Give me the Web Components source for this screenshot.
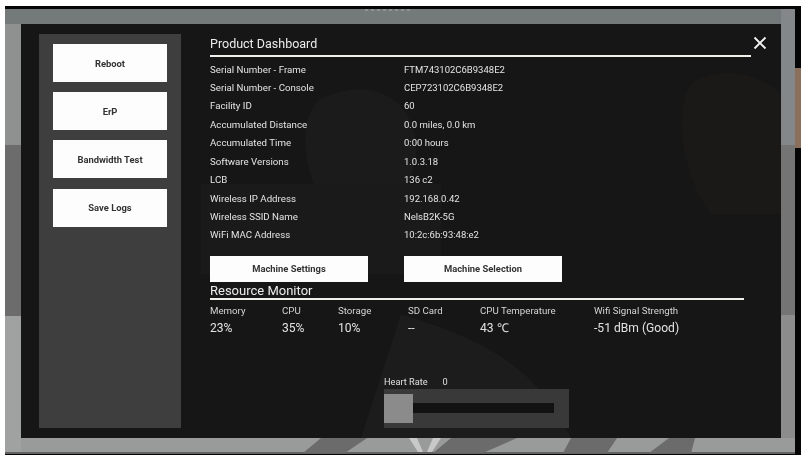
<!DOCTYPE html>
<html>
<head>
<meta charset="utf-8">
<title>Product Dashboard</title>
<style>
  html, body { margin: 0; background: #fff; }
  body { width: 808px; height: 462px; overflow: hidden; font-family: Roboto, "Liberation Sans", sans-serif; }
</style>
</head>
<body>
<x-screen>
  <x-modal>
    <x-sidebar>
      <x-button>Reboot</x-button>
      <x-button>ErP</x-button>
      <x-button>Bandwidth Test</x-button>
      <x-button>Save Logs</x-button>
    </x-sidebar>
    <x-main>
      <x-heading>Product Dashboard</x-heading>
      <x-info-list>
        <x-info-row label="Serial Number - Frame" value="FTM743102C6B9348E2"></x-info-row>
        <x-info-row label="Serial Number - Console" value="CEP723102C6B9348E2"></x-info-row>
        <x-info-row label="Facility ID" value="60"></x-info-row>
        <x-info-row label="Accumulated Distance" value="0.0 miles, 0.0 km"></x-info-row>
        <x-info-row label="Accumulated Time" value="0:00 hours"></x-info-row>
        <x-info-row label="Software Versions" value="1.0.3.18"></x-info-row>
        <x-info-row label="LCB" value="136 c2"></x-info-row>
        <x-info-row label="Wireless IP Address" value="192.168.0.42"></x-info-row>
        <x-info-row label="Wireless SSID Name" value="NelsB2K-5G"></x-info-row>
        <x-info-row label="WiFi MAC Address" value="10:2c:6b:93:48:e2"></x-info-row>
      </x-info-list>
      <x-actions>
        <x-button kind="wide">Machine Settings</x-button>
        <x-button kind="wide">Machine Selection</x-button>
      </x-actions>
      <x-heading kind="sub">Resource Monitor</x-heading>
      <x-stats>
        <x-stat label="Memory" value="23%" style="width:72px"></x-stat>
        <x-stat label="CPU" value="35%" style="width:56px"></x-stat>
        <x-stat label="Storage" value="10%" style="width:70px"></x-stat>
        <x-stat label="SD Card" value="--" style="width:72px"></x-stat>
        <x-stat label="CPU Temperature" value="43 ℃" style="width:114px"></x-stat>
        <x-stat label="Wifi Signal Strength" value="-51 dBm (Good)"></x-stat>
      </x-stats>
      <x-heart-rate value="0"></x-heart-rate>
    </x-main>
  </x-modal>
</x-screen>

<script>
  // small helper so each class just hands over its markup
  function shadow(el, html) {
    el.attachShadow({ mode: 'open' }).innerHTML = html;
  }

  class XScreen extends HTMLElement {
    constructor() {
      super();
      shadow(this, `
        <style>
          :host { display: block; width: 796px; height: 449px; margin: 6px 0 0 5px; background: #060606; position: relative; overflow: hidden; filter: blur(.5px); }
          .frame {
            box-sizing: border-box; width: 790px; height: 444px; margin-top: 3px; padding: 15px 14px 15px 16px;
            background:
              linear-gradient(#737a79 0 15px, transparent 15px),
              linear-gradient(#8f9190 0 136px, #6c6c6c 136px 307px, #a0a1a1 307px);
          }
          .photo { position: absolute; left: 0; top: 0; width: 796px; height: 449px; }
          .inner { position: relative; }
        </style>
        <div class="frame">
          <svg class="photo" viewBox="0 0 796 449">
            <rect x="776" y="3" width="14" height="136" fill="#83878a"/>
            <rect x="776" y="139" width="14" height="170" fill="#747474"/>
            <rect x="776" y="309" width="14" height="138" fill="#8c8c8c"/>
            <rect x="16" y="432" width="774" height="14" fill="#999a9a"/>
            <rect x="0" y="446" width="790" height="2" fill="#626262"/>
            <path d="M316 432h46l-22 15h-42zM446 432h66l-34 15h-50zM566 432h46l-10 15h-44zM664 432h26l-4 15h-42z" fill="#6b6b6b"/>
            <path d="M404 432l9 14h5l-6-14zM428 432l-6 14h5l9-14z" fill="#c8c8c8"/>
            <path d="M360 4h45" stroke="#8f9594" stroke-width="2" stroke-dasharray="3 3"/>
            <path d="M790 62h6v80h-6z" fill="#8a6f5c"/>
          </svg>
          <div class="inner"><slot></slot></div>
        </div>
      `);
    }
  }

  class XModal extends HTMLElement {
    constructor() {
      super();
      shadow(this, `
        <style>
          :host { display: flex; box-sizing: border-box; width: 760px; height: 414px; padding: 10px 30px 10px 18px; gap: 29px; background: #161616; position: relative; }
          .back { position: absolute; left: 0; top: 0; width: 100%; height: 100%; }
          .close { position: absolute; left: 732px; top: 12px; width: 14px; height: 14px; }
          ::slotted(*) { position: relative; }
        </style>
        <svg class="back" viewBox="0 0 760 414">
          <path d="M300 75c40-20 90-10 95 45 3 40-25 75-70 70-40-6-55-95-25-115z" fill="#1b1b1b"/>
          <path d="M180 160h240v90H180z" fill="#1a1a1a"/>
          <path d="M380 290c60 20 130 40 170 124H340z" fill="#1c1c1c"/>
          <path d="M670 60c30-20 70-10 90 10v120h-70c-25-30-40-100-20-130z" fill="#1b1918"/>
        </svg>
        <svg class="close" viewBox="0 0 14 14"><path d="M1.5 1.5l11 11M12.5 1.5l-11 11" stroke="#f4f4f4" stroke-width="1.8" fill="none"/></svg>
        <slot></slot>
      `);
    }
  }

  class XSidebar extends HTMLElement {
    constructor() {
      super();
      shadow(this, `
        <style>
          :host { display: flex; flex-direction: column; box-sizing: border-box; flex: none; width: 142px; height: 394px; padding: 10px 14px; gap: 10.2px; background: #3e3e3e; }
        </style>
        <slot></slot>
      `);
    }
  }

  class XButton extends HTMLElement {
    constructor() {
      super();
      shadow(this, `
        <style>
          :host { display: flex; align-items: center; justify-content: center; box-sizing: border-box; height: 38px; background: #fdfdfd; color: #333; font-size: 9.4px; font-weight: 700; }
          :host([kind="wide"]) { width: 158px; height: 26px; }
        </style>
        <slot></slot>
      `);
    }
  }

  class XMain extends HTMLElement {
    constructor() {
      super();
      shadow(this, `
        <style>
          :host { display: flex; flex-direction: column; flex: 1; min-width: 0; color: #e6e6e6; }
        </style>
        <slot></slot>
      `);
    }
  }

  class XHeading extends HTMLElement {
    constructor() {
      super();
      shadow(this, `
        <style>
          :host { display: block; box-sizing: border-box; height: 23px; padding-top: 1px; border-bottom: 2px solid #f0f0ea; color: #ececec; font-size: 12.5px; line-height: 18px; }
          :host([kind="sub"]) { width: 534px; height: 17px; padding-top: 0; line-height: 15px; font-size: 13px; }
        </style>
        <slot></slot>
      `);
    }
  }

  class XInfoList extends HTMLElement {
    constructor() {
      super();
      shadow(this, `
        <style>
          :host { display: block; margin-top: 3.5px; }
        </style>
        <slot></slot>
      `);
    }
  }

  class XInfoRow extends HTMLElement {
    constructor() {
      super();
      shadow(this, `
        <style>
          :host { display: grid; grid-template-columns: 194px 1fr; height: 18.45px; line-height: 18.45px; font-size: 9.7px; color: #e4e4e4; }
          span + span { font-size: 9.5px; }
        </style>
        <span>${this.getAttribute('label')}</span>
        <span>${this.getAttribute('value')}</span>
      `);
    }
  }

  class XActions extends HTMLElement {
    constructor() {
      super();
      shadow(this, `
        <style>
          :host { display: flex; gap: 36px; margin-top: 11px; margin-bottom: 1px; }
        </style>
        <slot></slot>
      `);
    }
  }

  class XStats extends HTMLElement {
    constructor() {
      super();
      shadow(this, `
        <style>
          :host { display: flex; margin-top: 4px; }
        </style>
        <slot></slot>
      `);
    }
  }

  class XStat extends HTMLElement {
    constructor() {
      super();
      shadow(this, `
        <style>
          :host { display: block; flex: none; color: #d4d4d4; }
          .label { font-size: 9.7px; line-height: 14px; }
          .value { font-size: 12.1px; line-height: 16px; margin-top: 2px; color: #e2e2e2; }
        </style>
        <div class="label">${this.getAttribute('label')}</div>
        <div class="value">${this.getAttribute('value')}</div>
      `);
    }
  }

  class XHeartRate extends HTMLElement {
    constructor() {
      super();
      shadow(this, `
        <style>
          :host { display: block; margin: auto 0 0 174px; width: 185px; font-size: 9.2px; color: #e0e0e0; }
          .title { display: flex; gap: 15px; line-height: 14px; }
          .bar { position: relative; box-sizing: border-box; height: 39px; padding: 14px 15px 15px 0; background: #393939; }
          .track { height: 10px; background: #121212; }
          .thumb { position: absolute; left: 0; top: 5px; width: 29px; height: 29px; background: #8b8b8b; }
        </style>
        <div class="title"><span>Heart Rate</span><span>${this.getAttribute('value')}</span></div>
        <div class="bar"><div class="track"></div><div class="thumb"></div></div>
      `);
    }
  }

  customElements.define('x-screen', XScreen);
  customElements.define('x-modal', XModal);
  customElements.define('x-sidebar', XSidebar);
  customElements.define('x-button', XButton);
  customElements.define('x-main', XMain);
  customElements.define('x-heading', XHeading);
  customElements.define('x-info-list', XInfoList);
  customElements.define('x-info-row', XInfoRow);
  customElements.define('x-actions', XActions);
  customElements.define('x-stats', XStats);
  customElements.define('x-stat', XStat);
  customElements.define('x-heart-rate', XHeartRate);
</script>
</body>
</html>
